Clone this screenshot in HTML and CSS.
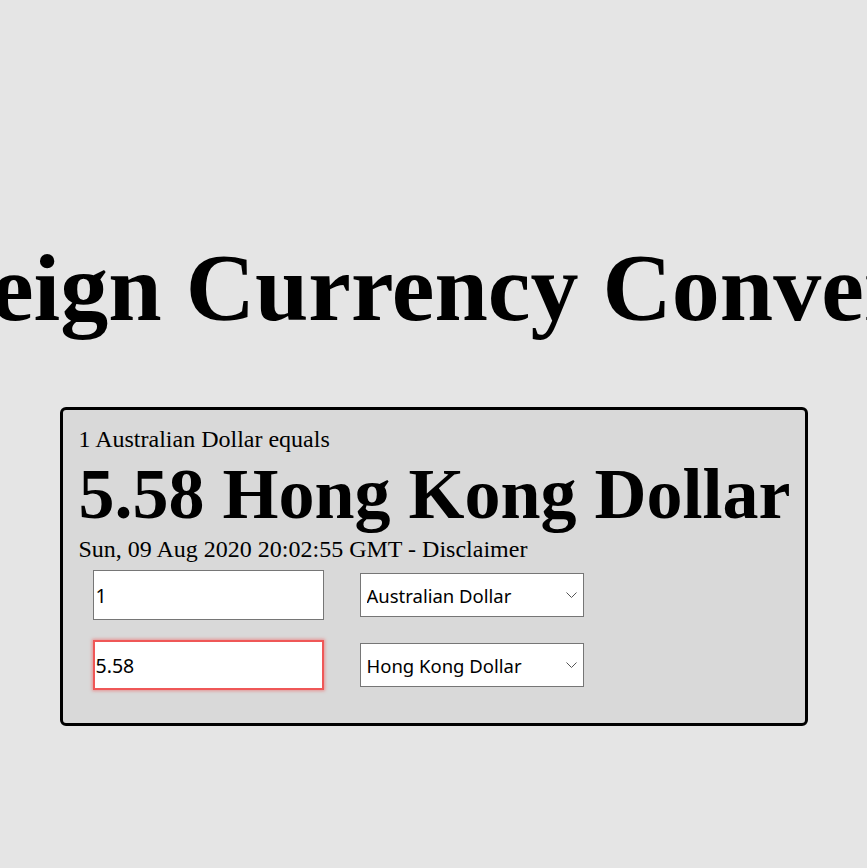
FILE: index.html
```html
<!DOCTYPE html>
<html lang="en">
<head>
<meta charset="utf-8">
<title>Foreign Currency Converter</title>
<link rel="stylesheet" href="styles.css">
</head>
<body>
<div class="page">
  <header class="title-wrap">
    <h1 class="title">Foreign Currency Converter</h1>
  </header>
  <section class="card">
    <p class="line-small">1 Australian Dollar equals</p>
    <p class="line-big">5.58 Hong Kong Dollar</p>
    <p class="line-small">Sun, 09 Aug 2020 20:02:55 GMT - Disclaimer</p>
    <div class="rows">
      <div class="row">
        <input class="amount" type="text" value="1">
        <span class="select-wrap">
          <select class="currency"><option>Australian Dollar</option></select>
          <svg class="chev" width="11" height="6" viewBox="0 0 11 6"><path d="M0.5 0.5 L5.5 5.5 L10.5 0.5" fill="none" stroke="#555" stroke-width="1"/></svg>
        </span>
      </div>
      <div class="row">
        <input class="amount focused" type="text" value="5.58">
        <span class="select-wrap">
          <select class="currency"><option>Hong Kong Dollar</option></select>
          <svg class="chev" width="11" height="6" viewBox="0 0 11 6"><path d="M0.5 0.5 L5.5 5.5 L10.5 0.5" fill="none" stroke="#555" stroke-width="1"/></svg>
        </span>
      </div>
    </div>
  </section>
</div>
</body>
</html>
```

FILE: styles.css
```css
html, body {
  margin: 0;
  padding: 0;
  background: #e5e5e5;
}
.page {
  overflow: hidden;
  padding-top: 232px;
  min-height: 868px;
  box-sizing: border-box;
  font-family: "Liberation Serif", "Times New Roman", serif;
  color: #000;
}
.title-wrap {
  display: flex;
  justify-content: center;
  margin: 0 0 64px;
}
.title {
  flex: none;
  margin: 0;
  font-size: 96px;
  font-weight: bold;
  white-space: nowrap;
}
.card {
  width: 748px;
  margin: 0 auto;
  box-sizing: border-box;
  background: #d9d9d9;
  border: 3px solid #000;
  border-radius: 6px;
  padding: 16px;
}
.line-small {
  margin: 0;
  font-size: 24px;
  white-space: nowrap;
}
.line-big {
  margin: 0;
  font-size: 72px;
  font-weight: bold;
  white-space: nowrap;
}
.rows {
  display: flex;
  flex-direction: column;
  gap: 20px;
  margin: 7px 0 17px 14px;
}
.row {
  display: flex;
  align-items: center;
  gap: 36px;
}
.amount {
  width: 231px;
  height: 50px;
  box-sizing: border-box;
  border: 1px solid #767676;
  border-radius: 0;
  padding: 0 2px;
  margin: 0;
  background: #fff;
  font-family: "Noto Sans", sans-serif;
  font-size: 19.5px;
  color: #000;
  outline: none;
}
.amount.focused {
  border: 2px solid #ef5757;
  padding: 0 1px;
  box-shadow: 0 0 3px 1px rgba(240, 90, 90, 0.55);
}
.select-wrap {
  position: relative;
  display: inline-block;
}
.currency {
  display: block;
  -webkit-appearance: none;
  appearance: none;
  width: 224px;
  height: 44px;
  box-sizing: border-box;
  border: 1px solid #767676;
  border-radius: 0;
  background: #fff;
  padding: 0 24px 0 6px;
  margin: 0;
  font-family: "Noto Sans", sans-serif;
  font-size: 18.5px;
  color: #000;
}
.chev {
  position: absolute;
  right: 7px;
  top: 19px;
  pointer-events: none;
}
```
